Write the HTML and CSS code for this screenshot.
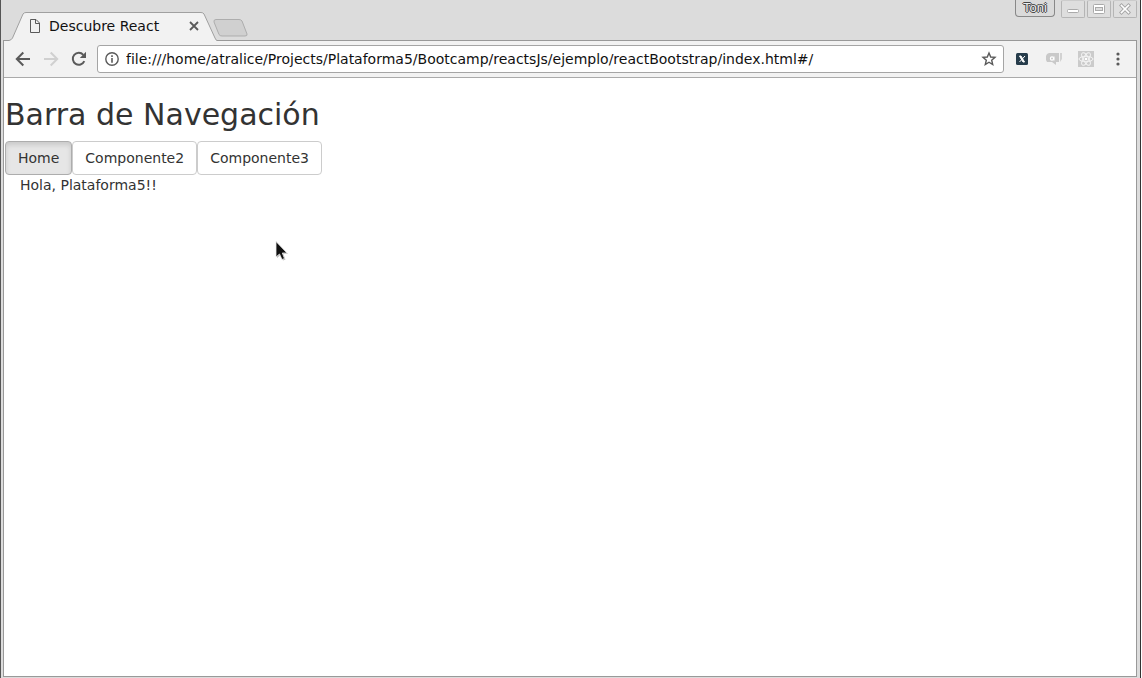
FILE: index.html
```html
<!DOCTYPE html>
<html lang="es">
<head>
<meta charset="utf-8">
<title>Descubre React</title>
<link rel="stylesheet" href="styles.css">
</head>
<body>
<div class="window">
  <header class="titlebar">
    <div class="tab">
      <svg class="tab-shape" width="208" height="30" viewBox="0 0 208 30"><path d="M0 30V28.500Q2.500 28 3.500 26L14 2Q15 .5 17 .5H192Q194 .5 195 2L206 26Q207 28.500 208 28.500V30Z" fill="#f2f2f2"/><path d="M0 28.500Q2.500 28 3.500 26L14 2Q15 .5 17 .5H192Q194 .5 195 2L206 26Q207 28.500 208 28.500" fill="none" stroke="#a0a0a0"/></svg>
      <div class="tab-content">
        <svg width="12" height="14" viewBox="0 0 12 14" fill="none" stroke="#5a5a5a"><path d="M1.500 .5H7L10.500 4V13.500H1.500ZM6.500 .5V4.500H10.500"/></svg>
        <span class="tab-title">Descubre React</span>
        <button class="plain" type="button" aria-label="Cerrar pestaña"><svg width="10" height="10" viewBox="0 0 10 10" stroke="#5a5a5a" stroke-width="1.800"><path d="M1 1L9 9M9 1L1 9"/></svg></button>
      </div>
    </div>
    <button class="plain new-tab" type="button" aria-label="Nueva pestaña"><svg width="36" height="18" viewBox="0 0 36 18"><path d="M3 .5H26Q28 .5 29 2L34 15Q34.500 17 32 17H9Q7 17 6 15.500L1 3Q.5 .5 3 .5Z" fill="#d0d0d0" stroke="#adadad"/></svg></button>
    <div class="window-controls">
      <button class="user" type="button">Toni</button>
      <button class="control" type="button" aria-label="Minimizar"><svg width="22" height="16" viewBox="0 0 22 16"><rect x="5.500" y="8.500" width="11" height="3" rx="1" fill="#fff" stroke="#aaa"/></svg></button>
      <button class="control" type="button" aria-label="Maximizar"><svg width="22" height="16" viewBox="0 0 22 16"><rect x="5.500" y="3.500" width="11" height="9" rx="1" fill="#fff" stroke="#aaa"/><rect x="7.500" y="6.500" width="7" height="3" fill="#ddd" stroke="#aaa"/></svg></button>
      <button class="control" type="button" aria-label="Cerrar"><svg width="22" height="16" viewBox="0 0 22 16" stroke-linecap="square"><path d="M7.500 4.500L14.500 11.500M14.500 4.500L7.500 11.500" stroke="#a5a5a5" stroke-width="3.500"/><path d="M7.500 4.500L14.500 11.500M14.500 4.500L7.500 11.500" stroke="#fff" stroke-width="1.700"/></svg></button>
    </div>
  </header>
  <div class="frame">
    <nav class="toolbar" aria-label="Navegador">
      <div class="history">
        <button class="plain" type="button" aria-label="Atrás"><svg width="16" height="16" viewBox="0 0 16 16" fill="none" stroke="#5a5a5a" stroke-width="2"><path d="M15 8H2M8.300 1.500L1.800 8L8.300 14.500"/></svg></button>
        <button class="plain" type="button" aria-label="Adelante"><svg width="16" height="16" viewBox="0 0 16 16" fill="none" stroke="#d0d0d0" stroke-width="2"><path d="M1 8H14M7.700 1.500L14.200 8L7.700 14.500"/></svg></button>
        <button class="plain" type="button" aria-label="Recargar"><svg width="16" height="16" viewBox="0 0 16 16"><path d="M13.300 10.200A6 6 0 1 1 12.300 3.800" fill="none" stroke="#5a5a5a" stroke-width="2"/><path d="M15 .8V7H8.800Z" fill="#5a5a5a"/></svg></button>
      </div>
      <div class="address">
        <svg width="14" height="14" viewBox="0 0 14 14"><circle cx="7" cy="7" r="6.200" fill="none" stroke="#5a5a5a" stroke-width="1.400"/><path d="M6.200 3.300H7.800V4.900H6.200ZM6.200 6H7.800V10.700H6.200Z" fill="#5a5a5a"/></svg>
        <input class="url" type="text" aria-label="Dirección" value="file:///home/atralice/Projects/Plataforma5/Bootcamp/reactsJs/ejemplo/reactBootstrap/index.html#/">
        <button class="plain" type="button" aria-label="Marcador"><svg width="16" height="16" viewBox="0 0 16 16"><path d="M8 2L9.700 6L14 6.400L10.700 9.200L11.700 13.500L8 11.200L4.300 13.500L5.300 9.200L2 6.400L6.300 6Z" fill="none" stroke="#5a5a5a" stroke-width="1.400"/></svg></button>
      </div>
      <div class="extensions">
        <button class="plain" type="button" aria-label="Extensión X"><svg width="16" height="16" viewBox="0 0 16 16"><rect x="2" y="2" width="12" height="12" rx="1.500" fill="#263c4b"/><path d="M5.500 5H7L10.500 11H9ZM11 5L5.500 11" fill="#fff" stroke="#fff"/></svg></button>
        <button class="plain" type="button" aria-label="Comentarios"><svg width="16" height="16" viewBox="0 0 16 16"><path d="M1 3L3 2H13V11H10V14L6 11H1L0 9V5Z" fill="#c9c9c9"/><path d="M14 2H16V8L14 11Z" fill="#d2d2d2"/><circle cx="6" cy="7.500" r="1.600" fill="none" stroke="#fff" stroke-width="1.200"/><path d="M8 5.500V9.500" stroke="#fff"/></svg></button>
        <button class="plain" type="button" aria-label="React"><svg width="16" height="16" viewBox="0 0 16 16"><path d="M0 0H16V16H0Z" fill="#cbcbcb"/><g fill="none" stroke="#f4f4f4"><ellipse cx="8" cy="8" rx="7" ry="2.700"/><ellipse cx="8" cy="8" rx="7" ry="2.700" transform="rotate(60 8 8)"/><ellipse cx="8" cy="8" rx="7" ry="2.700" transform="rotate(120 8 8)"/></g><circle cx="8" cy="8" r="1.300" fill="#fff"/></svg></button>
        <button class="plain" type="button" aria-label="Menú"><svg width="16" height="16" viewBox="0 0 16 16" fill="#5a5a5a"><circle cx="8" cy="3" r="1.600"/><circle cx="8" cy="8" r="1.600"/><circle cx="8" cy="13" r="1.600"/></svg></button>
      </div>
    </nav>
    <main class="page">
      <h2 class="heading">Barra de Navegación</h2>
      <div class="nav-buttons">
        <button class="btn active" type="button">Home</button>
        <button class="btn" type="button">Componente2</button>
        <button class="btn" type="button">Componente3</button>
      </div>
      <p class="greeting">Hola, Plataforma5!!</p>
    </main>
  </div>
  <svg class="pointer" width="14" height="22" viewBox="0 0 14 22"><path d="M1 1V16L4.500 13L7 18.500L9.500 17.500L7.300 12H12Z" fill="#bbb" transform="translate(1 1)"/><path d="M1 .5V16L4.500 13L7 18.500L9.500 17.500L7.300 12H12Z" fill="#111" stroke="#eee" stroke-width=".8"/></svg>
</div>
</body>
</html>
```
FILE: styles.css
```css
* {
  box-sizing: border-box;
}

body {
  margin: 0;
  background: #fff;
  color: #333;
  font-family: "DejaVu Sans", sans-serif;
  font-size: 14px;
  line-height: 20px;
}

button,
input {
  font: inherit;
}

svg {
  display: block;
}

.window {
  position: relative;
  display: flex;
  flex-direction: column;
  min-height: 100vh;
  margin-right: 1px;
  padding: 0 3px 1px 2px;
  border-left: 1px solid #555;
  border-right: 1px solid #333;
  background: #dcdcdc;
}

.titlebar {
  display: flex;
  height: 40px;
}

.tab {
  display: grid;
  z-index: 1;
  width: 208px;
  height: 30px;
  margin: 12px 0 0 6px;
}

.tab-shape,
.tab-content {
  grid-area: 1 / 1;
}

.tab-content {
  display: flex;
  align-items: center;
  padding: 0 18px 2px 20px;
}

.tab-title {
  flex: 1;
  margin-left: 8px;
  color: #111;
}

.plain {
  display: block;
  padding: 0;
  border: 0;
  background: none;
}

.new-tab {
  align-self: flex-start;
  margin: 19px 0 0 -4px;
}

.window-controls {
  display: flex;
  align-items: flex-start;
  gap: 2px;
  margin-left: auto;
}

.user {
  width: 40px;
  height: 17px;
  margin-right: 4px;
  padding: 0;
  border: 1px solid #888;
  border-top: 0;
  border-radius: 0 0 4px 4px;
  background: #dadada;
  color: #eee;
  font-family: "Liberation Sans", sans-serif;
  font-size: 13px;
  line-height: 16px;
  text-shadow: 1px 0 #444, -1px 0 #444, 0 1px #444, 0 -1px #444;
}

.control {
  width: 24px;
  height: 18px;
  padding: 0;
  border: 1px solid #b5b5b5;
  border-top-color: #ccc;
  border-radius: 2px;
  background: #dedede;
}

.frame {
  display: flex;
  flex: 1;
  flex-direction: column;
  border: 1px solid #999;
}

.toolbar {
  display: flex;
  align-items: center;
  gap: 10px;
  padding: 4px 10px 4px 11px;
  border-bottom: 1px solid #aaa;
  background: #f2f2f2;
}

.history {
  display: flex;
  gap: 12px;
}

.address {
  display: flex;
  flex: 1;
  align-items: center;
  gap: 7px;
  height: 28px;
  padding: 0 6px 0 7px;
  border: 1px solid #a5a5a5;
  border-radius: 3px;
  background: #fff;
}

.url {
  flex: 1;
  min-width: 0;
  padding: 0;
  border: 0;
  outline: 0;
  background: none;
  color: #111;
}

.extensions {
  display: flex;
  gap: 16px;
}

.page {
  flex: 1;
  padding: 20px 1px;
  background: #fff;
}

.heading {
  margin: 0 0 10px;
  font-size: 30px;
  font-weight: 400;
  line-height: 33px;
}

.nav-buttons {
  display: flex;
}

.btn {
  padding: 6px 12px;
  border: 1px solid #ccc;
  border-radius: 4px;
  background: #fff;
  color: #333;
}

.btn.active {
  border-color: #adadad;
  background: #e6e6e6;
  box-shadow: inset 0 3px 5px rgba(0, 0, 0, 0.125);
}

.greeting {
  margin: 0;
  padding: 0 15px;
}

.pointer {
  position: absolute;
  top: 241px;
  left: 274px;
}
```
